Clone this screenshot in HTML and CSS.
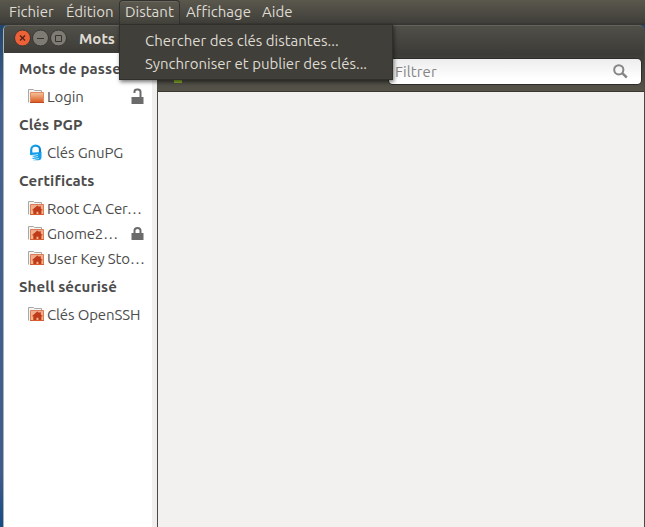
FILE: index.html
```html
<!DOCTYPE html>
<html lang="fr">
<head>
<meta charset="utf-8">
<title>Mots de passe et clés</title>
<link rel="stylesheet" href="styles.css">
</head>
<body>
<svg class="defs" width="0" height="0" aria-hidden="true">
  <defs>
    <linearGradient id="orange" x1="0" y1="0" x2="0" y2="1"><stop offset="0" stop-color="#f5c49c"/><stop offset="1" stop-color="#d9581f"/></linearGradient>
    <linearGradient id="pale" x1="0" y1="0" x2="0" y2="1"><stop offset="0" stop-color="#eda98c"/><stop offset="1" stop-color="#f5bd85"/></linearGradient>
    <linearGradient id="blue" x1="0" y1="0" x2="1" y2="1"><stop offset="0" stop-color="#16a5ed"/><stop offset="1" stop-color="#0878cd"/></linearGradient>
    <symbol id="folder" viewBox="0 0 16 16">
      <path d="M.5 13.5V.5h5l1 1h7v3" fill="#f5f4f2" stroke="#aaa8a4"/>
      <path d="M2.500 3.500h13v10h-13z" fill="url(#orange)" stroke="#e38a62"/>
      <path d="M2 13.500h14" stroke="#c04a22"/>
    </symbol>
    <symbol id="home" viewBox="0 0 16 16">
      <path d="M.5 13.5V.5h5l1 1h7v3" fill="#f5f4f2" stroke="#aaa8a4"/>
      <path d="M2.500 3.500h13v10h-13z" fill="url(#pale)" stroke="#df7c57"/>
      <path d="M9.300 4.500l2 1.500v-.8h1.500v2.200L15 9.300h-1.600V13h-3v-2.300H8.500V13H5.300V9.300H3.800z" fill="#c03a1c"/>
      <path d="M2 13.500h14" stroke="#d65c31"/>
    </symbol>
    <symbol id="gpg" viewBox="0 0 14 17">
      <path d="M2.200 9V6a4.300 4.300 0 0 1 8.800 0v3" fill="none" stroke="url(#blue)" stroke-width="2.200"/>
      <path d="M1 8.500h4L12.500 8v5.500Q12.300 16 10 16.300H4l3-1.300-4.500-.2 3.300-1.500L3 13l3-1.400L1 11z" fill="#159fea"/>
      <path d="M3 11.500l6-1M3 13.700l6-1.200M4 15.500l6-1" stroke="#d5f0fc" stroke-width=".8"/>
    </symbol>
  </defs>
</svg>

<nav class="menubar">
  <span class="entry file">Fichier</span>
  <span class="entry edit">Édition</span>
  <span class="entry remote open">Distant</span>
  <span class="entry view">Affichage</span>
  <span class="entry help">Aide</span>
</nav>

<main class="window">
  <header class="titlebar">
    <svg class="controls" width="56" height="18" viewBox="0 0 56 18">
      <circle cx="9.500" cy="9" r="8" fill="#ed6138" stroke="#373632"/>
      <path d="M7 6.500l5 5m0-5l-5 5" stroke="#4c2117" stroke-width="1.200"/>
      <circle cx="27.500" cy="9" r="8" fill="#7d7b74" stroke="#373632"/>
      <path d="M24 9.500h7" stroke="#35342f"/>
      <circle cx="45.500" cy="9" r="8" fill="#7d7b74" stroke="#373632"/>
      <path d="M42.500 6.500h6v6h-6z" fill="none" stroke="#35342f"/>
    </svg>
    <span class="title">Mots</span>
  </header>
  <div class="body">
    <aside class="sidebar">
      <h2>Mots de passe</h2>
      <div class="row"><svg width="16" height="16"><use href="#folder"/></svg><span>Login</span>
        <svg class="lock" width="13" height="17" viewBox="0 0 13 17"><path d="M.5 9h12v7H.5z" fill="#6b6b6b"/><path d="M3.500 5V3.500Q3.500 1.500 6 1.500H7Q9.500 1.500 9.500 4V9" fill="none" stroke="#6b6b6b" stroke-width="2"/></svg></div>
      <h2>Clés PGP</h2>
      <div class="row"><svg class="gpg" width="16" height="17"><use href="#gpg" width="14" height="17" x="1"/></svg><span>Clés GnuPG</span></div>
      <h2>Certificats</h2>
      <div class="row"><svg width="16" height="16"><use href="#home"/></svg><span>Root CA Cer…</span></div>
      <div class="row"><svg width="16" height="16"><use href="#home"/></svg><span>Gnome2…</span>
        <svg class="lock" width="13" height="15" viewBox="0 0 13 15"><path d="M.5 7h12v7H.5z" fill="#6b6b6b"/><path d="M3.500 8V4.500Q3.500 2 6.500 2T9.500 4.500V8" fill="none" stroke="#6b6b6b" stroke-width="2"/></svg></div>
      <div class="row"><svg width="16" height="16"><use href="#home"/></svg><span>User Key Sto…</span></div>
      <h2>Shell sécurisé</h2>
      <div class="row"><svg width="16" height="16"><use href="#home"/></svg><span>Clés OpenSSH</span></div>
    </aside>
    <section class="pane">
      <div class="toolbar">
        <span class="plus"></span>
        <div class="search"><span>Filtrer</span>
          <svg width="15" height="15" viewBox="0 0 15 15" fill="none" stroke="#858585" stroke-width="2"><circle cx="5.800" cy="5.800" r="4.600"/><path d="M9.200 9.200l4.600 4.300" stroke-width="2.400"/></svg>
        </div>
      </div>
      <div class="content"></div>
    </section>
  </div>
</main>

<div class="dropdown">
  <div>Chercher des clés distantes...</div>
  <div>Synchroniser et publier des clés...</div>
</div>
</body>
</html>
```
FILE: styles.css
```css
* { box-sizing: border-box; }
body {
  margin: 0;
  width: 645px;
  height: 527px;
  overflow: hidden;
  position: relative;
  display: flex;
  flex-direction: column;
  background: linear-gradient(#173d63, #466191 20%, #405b8e 90%, #164a86);
  font: 15px/20px Ubuntu, "Noto Sans", sans-serif;
  color: #4c4c4c;
  white-space: nowrap;
}
.defs { position: absolute; }
.menubar {
  height: 25px;
  flex: none;
  display: flex;
  padding: 0 0 0 3px;
  background: linear-gradient(#5a584d, #403f3a 90%, #373632 96%);
  color: #dfdbd2;
}
.entry { height: 25px; padding: 2px 0 0 6px; }
.file { width: 57px; }
.edit { width: 59px; }
.remote { width: 61px; }
.view { width: 76px; }
.open {
  height: 25px;
  padding: 1px 0 0 5px;
  border: 1px solid #33322e;
  border-bottom: 0;
  border-radius: 4px 4px 0 0;
  background: linear-gradient(#5b594f, #42413b);
  box-shadow: inset 0 1px #6b685d;
}
.window {
  flex: 1;
  min-height: 0;
  display: flex;
  flex-direction: column;
  margin-left: 3px;
  border-left: 1px solid #a9b4ae;
  border-right: 1px solid #494843;
  border-radius: 5px 5px 0 0;
}
.titlebar {
  height: 28px;
  flex: none;
  display: flex;
  align-items: center;
  padding: 0 0 2px 9px;
  background: linear-gradient(#504f48, #3d3c38);
  border-top: 1px solid #65635b;
  border-radius: 5px 5px 0 0;
}
.controls { position: relative; top: -.5px; }
.title { margin-left: 10px; font-weight: 700; color: #dfdbd2; }
.body { flex: 1; min-height: 0; display: flex; }
.sidebar {
  width: 154px;
  flex: none;
  background: #fff;
  border-right: 1px solid #4b4943;
  box-shadow: inset -5px 0 #f0efee;
}
h2 { margin: 0; height: 31px; padding-left: 15px; font-size: 15px; line-height: 31px; font-weight: 700; letter-spacing: .1px; }
.row { height: 25px; display: flex; align-items: center; padding-left: 24px; }
.row span { margin-left: 3px; letter-spacing: -.13px; }
.row .lock { margin: 0 13px 1px auto; }
.pane { flex: 1; display: flex; flex-direction: column; }
.toolbar {
  height: 39px;
  flex: none;
  display: flex;
  align-items: flex-start;
  padding: 6px 3px 0 16px;
  background: linear-gradient(#3c3b37, #55534a);
  border-bottom: 1px solid #39372f;
}
.plus { width: 8px; height: 4px; margin-top: 20px; background: #86ad2c; }
.search {
  width: 252px;
  height: 25px;
  margin-left: auto;
  display: flex;
  align-items: center;
  justify-content: space-between;
  padding: 0 13px 0 6px;
  border-radius: 4px;
  background: linear-gradient(#ededed, #fff 80%);
  box-shadow: 0 0 0 1px #2d2c28;
  color: #858585;
  letter-spacing: .1px;
}
.content { flex: 1; background: #f2f1f0; }
.dropdown {
  position: absolute;
  left: 119px;
  top: 24px;
  width: 274px;
  height: 56px;
  padding: 4px 0 0 25px;
  background: #403f39;
  border: 1px solid #302f2b;
  box-shadow: 1px 2px 4px #0008;
  color: #dfdbd2;
  line-height: 23px;
}
```
